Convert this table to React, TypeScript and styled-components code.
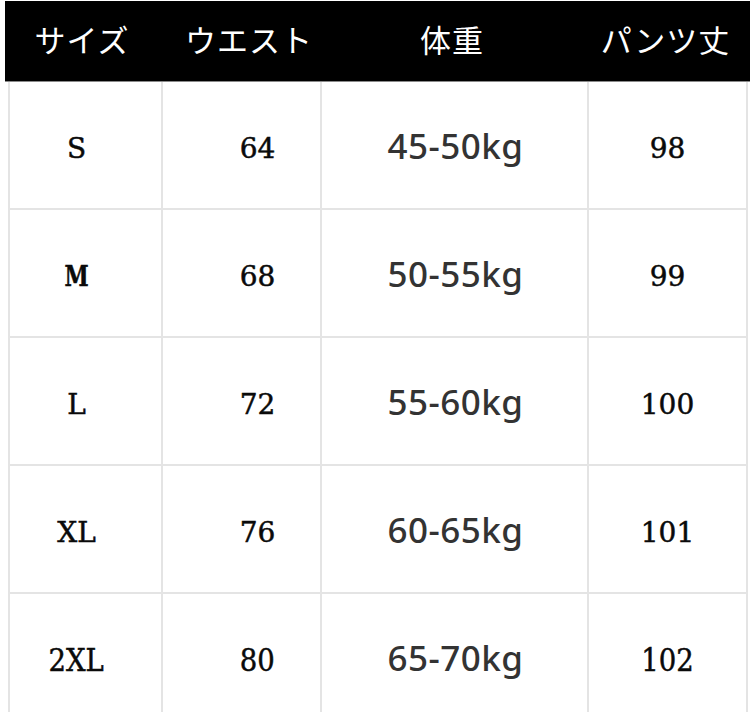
import React from "react";
import styled, { createGlobalStyle } from "styled-components";

const GlobalStyle = createGlobalStyle`
  html, body {
    margin: 0;
    padding: 0;
    background: #ffffff;
  }
`;

const Page = styled.div`
  width: 750px;
  height: 712px;
  overflow: hidden;
  background: #ffffff;
  padding-top: 1px;
  box-sizing: border-box;
`;

const Header = styled.div`
  margin-left: 5px;
  height: 80px;
  background: #000000;
  border-bottom: 1px solid #8a8a8a;
  display: grid;
  grid-template-columns: 154px 180px 226px 1fr;
  align-items: center;
`;

const HeadCell = styled.div<{ $shift?: number }>`
  color: #ffffff;
  font-family: "Noto Sans CJK JP", sans-serif;
  font-size: 31px;
  font-weight: 400;
  text-align: center;
  padding-left: ${(p) => Math.max(p.$shift ?? 0, 0) * 2}px;
  padding-right: ${(p) => Math.max(-(p.$shift ?? 0), 0) * 2}px;
  letter-spacing: 1px;
  padding-bottom: 6px;
`;

const Body = styled.div`
  margin-left: 8px;
  width: 740px;
`;

const Row = styled.div`
  display: grid;
  grid-template-columns: 153px 159px 267px 161px;
  height: 128px;
  box-sizing: border-box;
  border-bottom: 2px solid #e4e4e4;
`;

const Cell = styled.div<{ $shift?: number }>`
  display: flex;
  align-items: center;
  justify-content: center;
  border-left: 2px solid #e4e4e4;
  padding-left: ${(p) => Math.max(p.$shift ?? 0, 0) * 2}px;
  padding-right: ${(p) => Math.max(-(p.$shift ?? 0), 0) * 2}px;
  padding-top: 6px;

  &:last-child {
    border-right: 2px solid #e4e4e4;
  }
`;

const SerifText = styled.span<{ $narrow?: boolean; $bold?: boolean }>`
  font-family: "DejaVu Serif", "Liberation Serif", serif;
  font-size: ${(p) => (p.$narrow ? 32 : 28)}px;
  font-weight: ${(p) => (p.$bold ? 700 : 400)};
  color: #0a0a0a;
  -webkit-text-stroke: 0.5px #0a0a0a;
  display: inline-block;
  transform: ${(p) =>
    p.$narrow ? "scaleX(0.86)" : p.$bold ? "scaleX(0.78)" : "none"};
`;

const WeightText = styled.span`
  font-family: "Noto Sans", "Open Sans", sans-serif;
  font-size: 35px;
  font-weight: 500;
  color: #333333;
  letter-spacing: 0.5px;
  margin-bottom: 6px;
`;

const rows = [
  { size: "S", waist: "64", weight: "45-50kg", length: "98", narrow: false },
  { size: "M", waist: "68", weight: "50-55kg", length: "99", narrow: false },
  { size: "L", waist: "72", weight: "55-60kg", length: "100", narrow: false },
  { size: "XL", waist: "76", weight: "60-65kg", length: "101", narrow: false },
  { size: "2XL", waist: "80", weight: "65-70kg", length: "102", narrow: true },
];

export default function App() {
  return (
    <Page>
      <GlobalStyle />
      <Header>
        <HeadCell>サイズ</HeadCell>
        <HeadCell $shift={0}>ウエスト</HeadCell>
        <HeadCell>体重</HeadCell>
        <HeadCell $shift={8}>パンツ丈</HeadCell>
      </Header>
      <Body>
        {rows.map((r) => (
          <Row key={r.size}>
            <Cell $shift={-9}>
              <SerifText $narrow={r.narrow} $bold={r.size === "M"}>
                {r.size}
              </SerifText>
            </Cell>
            <Cell $shift={16}>
              <SerifText $narrow={r.narrow}>{r.waist}</SerifText>
            </Cell>
            <Cell $shift={1}>
              <WeightText>{r.weight}</WeightText>
            </Cell>
            <Cell>
              <SerifText $narrow={r.narrow}>{r.length}</SerifText>
            </Cell>
          </Row>
        ))}
      </Body>
    </Page>
  );
}
